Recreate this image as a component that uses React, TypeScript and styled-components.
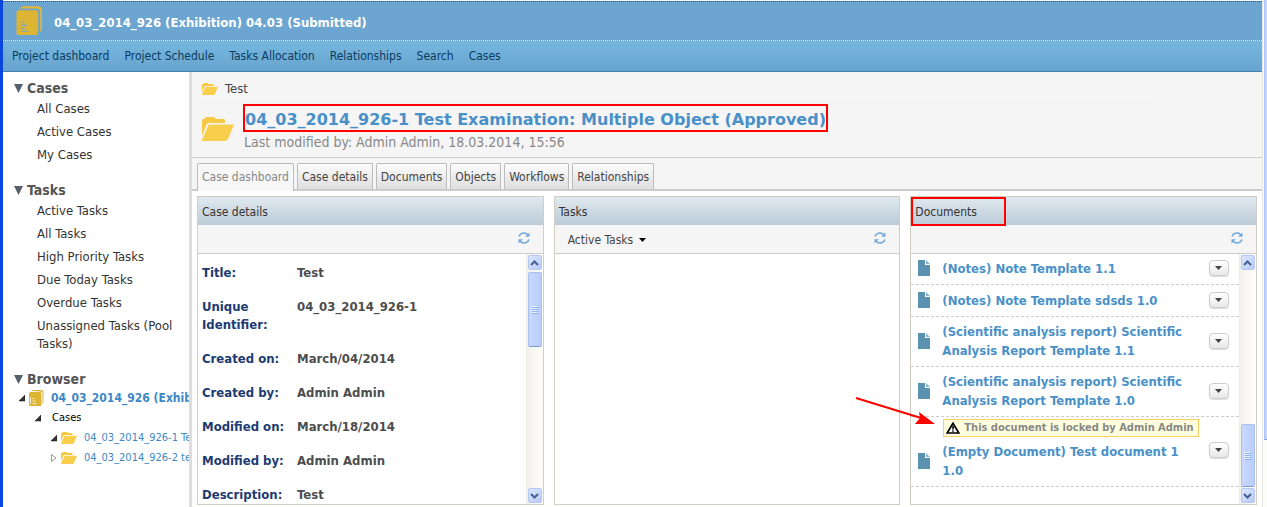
import React from "react";
import styled, { createGlobalStyle, css } from "styled-components";

const Global = createGlobalStyle`
  * { box-sizing: border-box; }
  body {
    margin: 0;
    background: #fff;
    color: #444;
    font-family: "DejaVu Sans Condensed", "DejaVu Sans", sans-serif;
    font-stretch: condensed;
    font-size: 12px;
    line-height: 18px;
  }
  h1, h2, h3, p, ul, dl, dd { margin: 0; padding: 0; }
  ul { list-style: none; }
  a { color: inherit; text-decoration: none; }
  button { font: inherit; color: inherit; padding: 0; cursor: pointer; }
`;

const Window = styled.div`
  display: flex;
  min-height: 100vh;
  border-left: 3px solid #0a46e0;
  overflow: hidden;
`;

const Page = styled.div`
  flex: 1;
  min-width: 0;
  display: flex;
  flex-direction: column;
  padding-top: 1px;
`;

const WindowScroll = styled.div`
  width: 5px;
  border-left: 1px solid #e8e8e2;
  padding-left: 1px;
  background: #fbfbf8;
`;

const WindowThumb = styled.div`
  height: 440px;
  background: #c3d3fd;
  border-left: 1px solid #b0c4f5;
  border-bottom: 1px solid #7f9fd8;
`;

const Banner = styled.header`
  display: flex;
  align-items: center;
  gap: 11px;
  height: 40px;
  padding-left: 13px;
  background: #6ca5cf;
  border-top: 1px dotted #25606a;
  border-bottom: 1px dotted #d5e8f5;
`;

const BannerTitle = styled.h1`
  color: #fff;
  font-size: 13px;
  font-weight: bold;
  padding-top: 3px;
`;

const Nav = styled.nav`
  display: flex;
  align-items: center;
  gap: 15px;
  height: 31px;
  padding-left: 9px;
  color: #0b3b60;
  background: linear-gradient(#77b7de, #67a4cf);
  border-bottom: 1px solid #3f83b3;
`;

const Columns = styled.div`
  flex: 1;
  display: flex;
`;

const Sidebar = styled.aside`
  flex: none;
  width: 189px;
  padding: 7px 0 0 11px;
  border-right: 3px solid #ddd;
  overflow: hidden;
  font-size: 13px;
`;

const SideSection = styled.section`
  margin-bottom: 15px;
`;

const SideHeading = styled.h2`
  display: flex;
  align-items: center;
  gap: 4px;
  color: #555;
  font-size: 14px;
  line-height: 18px;
`;

const SideList = styled.ul`
  padding: 0 10px 0 23px;
  color: #333;
`;

const SideItem = styled.li`
  padding: 3px 0 2px;
`;

const TreeRow = styled.li<{ $level: number }>`
  display: flex;
  align-items: center;
  gap: 4px;
  height: 20px;
  padding-left: ${(p) => 5 + p.$level * 16}px;
  white-space: nowrap;
  font-size: 11px;
  color: #3d88c5;
  svg { flex: none; }
`;

const TreeLabel = styled.a<{ $root?: boolean; $plain?: boolean }>`
  min-width: 0;
  overflow: hidden;
  padding-left: ${(p) => (p.$plain ? 7 : 3)}px;
  ${(p) => p.$root && css`font-size: 12px; font-weight: bold;`}
  ${(p) => p.$plain && css`color: #000;`}
`;

const Main = styled.main`
  flex: 1;
  min-width: 0;
`;

const CaseHeader = styled.div`
  height: 86px;
  padding-left: 10px;
  background: #f5f5f5;
  border-bottom: 1px solid #ccc;
`;

const Breadcrumb = styled.div`
  display: flex;
  align-items: center;
  gap: 7px;
  height: 31px;
  margin-right: 110px;
  padding-top: 3px;
  border-bottom: 1px solid #eee;
  font-size: 13px;
`;

const CaseSummary = styled.div`
  display: flex;
  gap: 9px;
  padding-top: 1px;
  > svg { margin-top: 13px; }
`;

const CaseTitle = styled.h2`
  width: fit-content;
  padding: 4px 0 0;
  border: 2px solid #f00;
  color: #4a90c8;
  font-family: "DejaVu Sans", sans-serif;
  font-stretch: normal;
  font-size: 16px;
  line-height: 20px;
  white-space: nowrap;
`;

const CaseMeta = styled.p`
  color: #888;
  padding-left: 1px;
  font-size: 14px;
  line-height: 20px;
`;

const Tabs = styled.div`
  display: flex;
  gap: 3px;
  height: 33px;
  padding: 5px 5px 0;
  background: #f5f5f5;
  border-bottom: 2px solid #ccc;
`;

const Tab = styled.button<{ $active?: boolean }>`
  height: ${(p) => (p.$active ? 28 : 26)}px;
  padding: 0 4px ${(p) => (p.$active ? 2 : 0)}px;
  border: 1px solid #bbb;
  border-bottom: 0;
  border-radius: 2px 2px 0 0;
  background: ${(p) => (p.$active ? "#f7f7f7" : "linear-gradient(#fcfcfc, #dedede)")};
  color: ${(p) => (p.$active ? "#888" : "#444")};
`;

const Panels = styled.div`
  display: grid;
  grid-template-columns: repeat(3, minmax(0, 1fr));
  align-items: start;
  gap: 10px;
  padding: 5px 5px 2px;
`;

const Panel = styled.section`
  position: relative;
  border: 1px solid #d2cec4;
`;

const PanelTitle = styled.h3`
  height: 28px;
  padding: 6px 4px 0;
  background: linear-gradient(#dfe9ef, #bccbd7);
  color: #333;
  font-size: 12px;
  font-weight: normal;
`;

const Toolbar = styled.div`
  display: flex;
  align-items: center;
  justify-content: space-between;
  height: 29px;
  padding: 0 13px 2px 13px;
  background: #f5f5f5;
  border-bottom: 1px solid #ccc;
`;

const FilterButton = styled.button`
  display: flex;
  align-items: center;
  gap: 6px;
  padding-top: 4px;
  border: 0;
  background: none;
`;

const IconButton = styled.button`
  display: flex;
  margin-left: auto;
  border: 0;
  background: none;
`;

const PanelBody = styled.div`
  display: flex;
  height: 250px;
`;

const ScrollContent = styled.div`
  flex: 1;
  min-width: 0;
  overflow: hidden;
`;

const Fields = styled.dl`
  display: grid;
  grid-template-columns: 95px 1fr;
  row-gap: 16px;
  padding: 10px 4px;
  font-size: 13px;
  font-weight: bold;
  color: #4d4d4d;
  dt { color: #1c3b72; padding-right: 10px; }
`;

const DocItem = styled.li<{ $locked?: boolean }>`
  display: flex;
  align-items: center;
  justify-content: space-between;
  padding: ${(p) => (p.$locked ? 2 : 5)}px 10px 6px 7px;
  border-bottom: 1px dashed #ccc;
  &:first-child { padding-top: 4px; }
`;

const DocRow = styled.div`
  display: flex;
  align-items: center;
  gap: 12px;
  min-height: 20px;
  svg { flex: none; }
`;

const DocLink = styled.a`
  width: 242px;
  color: #4a90c8;
  font-size: 13px;
  font-weight: bold;
  line-height: 19px;
`;

const LockNotice = styled.p`
  display: flex;
  align-items: center;
  gap: 4px;
  width: fit-content;
  height: 18px;
  margin: 0 0 5px 25px;
  padding: 0 4px 0 2px;
  border: 1px solid #fc6;
  background: #ffffde;
  color: #888;
  font-size: 11px;
  font-weight: bold;
  white-space: nowrap;
`;

const MenuButton = styled.button`
  display: flex;
  align-items: center;
  justify-content: center;
  width: 20px;
  height: 16px;
  border: 1px solid #ccc;
  border-radius: 4px;
  background: linear-gradient(#fff, #e8e8e8);
  box-shadow: 0 1px 1px #ddd;
`;

const ScrollTrack = styled.div`
  display: flex;
  flex-direction: column;
  width: 17px;
  padding: 1px;
  border-left: 1px solid #eeede5;
  background: linear-gradient(90deg, #f3f1ec, #fefefb);
`;

const ScrollArrow = styled.button`
  display: flex;
  align-items: center;
  justify-content: center;
  height: 15px;
  border: 1px solid #b5c8f3;
  border-radius: 2px;
  background: linear-gradient(135deg, #dce6ff, #b8cbf8);
`;

const ScrollThumb = styled.div<{ $size: number; $end?: boolean }>`
  display: flex;
  align-items: center;
  justify-content: center;
  height: ${(p) => p.$size}px;
  margin: ${(p) => (p.$end ? "auto 0 1px" : "2px 0 auto")};
  border: 1px solid #a8c0f0;
  border-bottom-color: #7c9fd3;
  border-radius: 2px;
  background: linear-gradient(90deg, #c9d8fd, #b8cdfa);
`;

const TitleMark = styled.span`
  position: absolute;
  top: 0;
  left: 0;
  width: 95px;
  height: 29px;
  border: 2px solid #f00;
`;

const Pointer = styled.svg`
  position: absolute;
  top: 198px;
  left: -56px;
  pointer-events: none;
`;

const ProjectIcon = ({ size }: { size: number }) => (
  <svg width={size} height={(size * 28) / 26} viewBox="0 0 26 28">
    <path d="M4 3.500 Q4 .3 8 .3 H21 Q25 .3 25 4 V22 Q25 24 23.300 25 V6 Q23.300 2.500 20 2.500 H4Z" fill="#e3b635" />
    <path d="M3 4 H18.500 Q21.300 4 21.300 7 V25 Q21.300 28 18 28 H3 Q.5 28 .5 25.500 V6.500 Q.5 4 3 4Z" fill="#deb433" />
    <path d="M3.500 14V25" stroke="#a9b78f" strokeWidth="1" />
    <path d="M5 15.500h3 M5 18.500h6 M5 21.500h4 M5 24.500h7" stroke="#7fa9b8" strokeWidth="1.300" fill="none" />
  </svg>
);

const SmallProjectIcon = () => (
  <svg width="15" height="16" viewBox="0 0 15 16">
    <path d="M2 1 Q2.500 0 4 0 H12 Q14.500 0 14.500 2.500 V13 L13.500 14 V3.500 Q13.500 1.500 11.500 1.500Z" fill="#dfb43a" />
    <path d="M1.500 2 H11 Q12.500 2 12.500 3.500 V14.500 Q12.500 16 11 16 H1.500 Q0 16 0 14.500 V3.500 Q0 2 1.500 2Z" fill="#deb433" />
    <path d="M1.500 7.500V14 M3.500 8.500h2 M3.500 11h3 M3.500 13.500h4" stroke="#f7ecc8" fill="none" />
  </svg>
);

const Folder = ({ width }: { width: number }) => (
  <svg width={width} height={width * 0.75} viewBox="0 0 32 24">
    <path d="M0 3 Q0 2 2 2 L4 0 H12 L14 2 H22 Q23 2 23 4 V6 H7 Q5 6 4.500 7.500 L0 19Z" fill="#f5c944" />
    <path d="M8 7.500 H32 L26 22 Q25 24 23 24 H0 V23 L6 9 Q6.500 7.500 8 7.500Z" fill="#f8cf4c" />
  </svg>
);

const Disclosure = () => (
  <svg width="9" height="9" viewBox="0 0 9 9">
    <path d="M0 0H9L4.500 9Z" fill="#55606c" />
  </svg>
);

const TreeArrow = ({ open }: { open?: boolean }) => (
  <svg width="6" height="8" viewBox="0 0 6 8">
    {open ? (
      <path d="M6 1V7H0Z" fill="#333" stroke="#111" strokeWidth=".5" />
    ) : (
      <path d="M.5 .5V7.500L5 4Z" fill="#fff" stroke="#999" />
    )}
  </svg>
);

const Refresh = () => (
  <svg width="12" height="12" viewBox="0 0 12 12" fill="none" stroke="#6fa9dc" strokeWidth="1.600">
    <path d="M1 4.500 Q2.500 1 6 1 Q8.500 1 10 3" />
    <path d="M11.500 .5V4.800H7.200Z" fill="#6fa9dc" stroke="none" />
    <path d="M11 7.500 Q9.500 11 6 11 Q3.500 11 2 9" />
    <path d="M.5 11.500V7.200H4.800Z" fill="#6fa9dc" stroke="none" />
  </svg>
);

const Caret = ({ color }: { color: string }) => (
  <svg width="7" height="4" viewBox="0 0 7 4">
    <path d="M0 0H7L3.500 4Z" fill={color} />
  </svg>
);

const FileIcon = () => (
  <svg width="12" height="16" viewBox="0 0 12 16">
    <path d="M0 0H7V5H12V16H0Z" fill="#5b91b1" />
    <path d="M8 0L12 4H8Z" fill="#8db4ca" />
  </svg>
);

const Warning = () => (
  <svg width="14" height="12" viewBox="0 0 14 12">
    <path d="M7 1.200L12.800 11H1.200Z" fill="#fff" stroke="#000" strokeWidth="1.700" />
    <path d="M7 4V7.500M7 8.300V9.700" stroke="#000" strokeWidth="1.600" />
  </svg>
);

const Chevron = ({ down }: { down?: boolean }) => (
  <svg width="9" height="6" viewBox="0 0 9 6">
    <path d={down ? "M1 1L4.500 4.500L8 1" : "M1 5L4.500 1.500L8 5"} fill="none" stroke="#47618f" strokeWidth="2" />
  </svg>
);

const Grip = () => (
  <svg width="7" height="8" viewBox="0 0 7 8">
    <path d="M0 .5H6M0 2.500H6M0 4.500H6M0 6.500H6" stroke="#eef4fe" />
    <path d="M1 1.500H7M1 3.500H7M1 5.500H7M1 7.500H7" stroke="#8cb0f8" />
  </svg>
);

const Scrollbar = ({ size, end }: { size: number; end?: boolean }) => (
  <ScrollTrack>
    <ScrollArrow aria-label="Scroll up"><Chevron /></ScrollArrow>
    <ScrollThumb $size={size} $end={end}><Grip /></ScrollThumb>
    <ScrollArrow aria-label="Scroll down"><Chevron down /></ScrollArrow>
  </ScrollTrack>
);

const navItems = ["Project dashboard", "Project Schedule", "Tasks Allocation", "Relationships", "Search", "Cases"];

const sections = [
  { title: "Cases", items: ["All Cases", "Active Cases", "My Cases"] },
  {
    title: "Tasks",
    items: ["Active Tasks", "All Tasks", "High Priority Tasks", "Due Today Tasks", "Overdue Tasks", "Unassigned Tasks (Pool Tasks)"],
  },
];

const tabs = ["Case dashboard", "Case details", "Documents", "Objects", "Workflows", "Relationships"];

const fields = [
  ["Title:", "Test"],
  ["Unique Identifier:", "04_03_2014_926-1"],
  ["Created on:", "March/04/2014"],
  ["Created by:", "Admin Admin"],
  ["Modified on:", "March/18/2014"],
  ["Modified by:", "Admin Admin"],
  ["Description:", "Test"],
];

const documents = [
  { name: "(Notes) Note Template 1.1" },
  { name: "(Notes) Note Template sdsds 1.0" },
  { name: "(Scientific analysis report) Scientific Analysis Report Template 1.1" },
  { name: "(Scientific analysis report) Scientific Analysis Report Template 1.0" },
  { name: "(Empty Document) Test document 1 1.0", lockedBy: "Admin Admin" },
];

export default function App() {
  return (
    <>
      <Global />
      <Window>
        <Page>
          <Banner>
            <ProjectIcon size={27} />
            <BannerTitle>04_03_2014_926 (Exhibition) 04.03 (Submitted)</BannerTitle>
          </Banner>
          <Nav>
            {navItems.map((item) => <a href="#" key={item}>{item}</a>)}
          </Nav>
          <Columns>
            <Sidebar>
              {sections.map((section) => (
                <SideSection key={section.title}>
                  <SideHeading><Disclosure />{section.title}</SideHeading>
                  <SideList>
                    {section.items.map((item) => (
                      <SideItem key={item}><a href="#">{item}</a></SideItem>
                    ))}
                  </SideList>
                </SideSection>
              ))}
              <SideSection>
                <SideHeading><Disclosure />Browser</SideHeading>
                <ul>
                  <TreeRow $level={0}>
                    <TreeArrow open /><SmallProjectIcon />
                    <TreeLabel href="#" $root>04_03_2014_926 (Exhibition)</TreeLabel>
                  </TreeRow>
                  <TreeRow $level={1}>
                    <TreeArrow open /><TreeLabel href="#" $plain>Cases</TreeLabel>
                  </TreeRow>
                  <TreeRow $level={2}>
                    <TreeArrow open /><Folder width={16} />
                    <TreeLabel href="#">04_03_2014_926-1 Test</TreeLabel>
                  </TreeRow>
                  <TreeRow $level={2}>
                    <TreeArrow /><Folder width={16} />
                    <TreeLabel href="#">04_03_2014_926-2 test</TreeLabel>
                  </TreeRow>
                </ul>
              </SideSection>
            </Sidebar>
            <Main>
              <CaseHeader>
                <Breadcrumb><Folder width={16} /><a href="#">Test</a></Breadcrumb>
                <CaseSummary>
                  <Folder width={32} />
                  <div>
                    <CaseTitle>04_03_2014_926-1 Test Examination: Multiple Object (Approved)</CaseTitle>
                    <CaseMeta>Last modified by: Admin Admin, 18.03.2014, 15:56</CaseMeta>
                  </div>
                </CaseSummary>
              </CaseHeader>
              <Tabs role="tablist">
                {tabs.map((tab, i) => (
                  <Tab key={tab} role="tab" aria-selected={i === 0} $active={i === 0}>{tab}</Tab>
                ))}
              </Tabs>
              <Panels>
                <Panel>
                  <PanelTitle>Case details</PanelTitle>
                  <Toolbar><IconButton aria-label="Refresh"><Refresh /></IconButton></Toolbar>
                  <PanelBody>
                    <ScrollContent>
                      <Fields>
                        {fields.map(([label, value]) => (
                          <React.Fragment key={label}><dt>{label}</dt><dd>{value}</dd></React.Fragment>
                        ))}
                      </Fields>
                    </ScrollContent>
                    <Scrollbar size={75} />
                  </PanelBody>
                </Panel>
                <Panel>
                  <PanelTitle>Tasks</PanelTitle>
                  <Toolbar>
                    <FilterButton>Active Tasks <Caret color="#000" /></FilterButton>
                    <IconButton aria-label="Refresh"><Refresh /></IconButton>
                  </Toolbar>
                  <PanelBody />
                </Panel>
                <Panel>
                  <PanelTitle>Documents</PanelTitle>
                  <TitleMark />
                  <Toolbar><IconButton aria-label="Refresh"><Refresh /></IconButton></Toolbar>
                  <PanelBody>
                    <ScrollContent>
                      <ul>
                        {documents.map((doc) => (
                          <DocItem key={doc.name} $locked={!!doc.lockedBy}>
                            <div>
                              {doc.lockedBy && (
                                <LockNotice><Warning />This document is locked by {doc.lockedBy}</LockNotice>
                              )}
                              <DocRow><FileIcon /><DocLink href="#">{doc.name}</DocLink></DocRow>
                            </div>
                            <MenuButton aria-label="Document actions"><Caret color="#444" /></MenuButton>
                          </DocItem>
                        ))}
                      </ul>
                    </ScrollContent>
                    <Scrollbar size={63} end />
                  </PanelBody>
                  <Pointer width="82" height="34" viewBox="0 0 82 34">
                    <path d="M1 3L66 23" stroke="#f00" strokeWidth="2" />
                    <path d="M80 29L60 29L65 23L64 17Z" fill="#f00" />
                  </Pointer>
                </Panel>
              </Panels>
            </Main>
          </Columns>
        </Page>
        <WindowScroll><WindowThumb /></WindowScroll>
      </Window>
    </>
  );
}
